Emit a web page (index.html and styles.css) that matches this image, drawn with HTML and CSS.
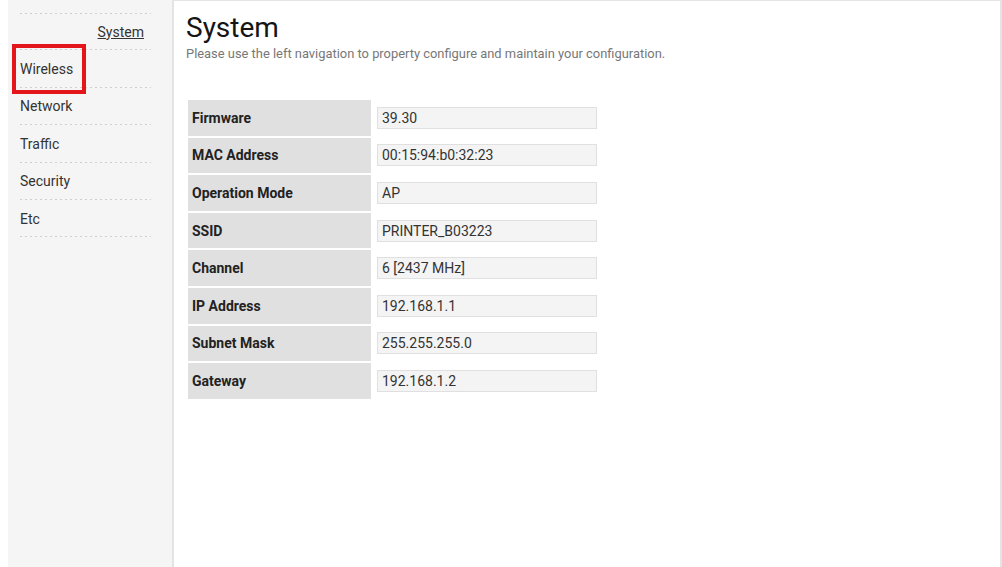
FILE: index.html
```html
<!DOCTYPE html>
<html lang="en">
<head>
<meta charset="utf-8">
<title>System</title>
<link rel="stylesheet" href="styles.css">
</head>
<body>
<div class="page">
  <aside class="sidebar">
    <ul class="nav">
      <li class="nav-item nav-current"><a href="#">System</a></li>
      <li class="nav-item nav-marked">Wireless<span class="highlight"></span></li>
      <li class="nav-item">Network</li>
      <li class="nav-item">Traffic</li>
      <li class="nav-item">Security</li>
      <li class="nav-item">Etc</li>
    </ul>
  </aside>
  <main class="main">
    <h1 class="title">System</h1>
    <p class="subtitle">Please use the left navigation to property configure and maintain your configuration.</p>
    <table class="info">
      <tr><th>Firmware</th><td><div class="field">39.30</div></td></tr>
      <tr><th>MAC Address</th><td><div class="field">00:15:94:b0:32:23</div></td></tr>
      <tr><th>Operation Mode</th><td><div class="field">AP</div></td></tr>
      <tr><th>SSID</th><td><div class="field">PRINTER_B03223</div></td></tr>
      <tr><th>Channel</th><td><div class="field">6 [2437 MHz]</div></td></tr>
      <tr><th>IP Address</th><td><div class="field">192.168.1.1</div></td></tr>
      <tr><th>Subnet Mask</th><td><div class="field">255.255.255.0</div></td></tr>
      <tr><th>Gateway</th><td><div class="field">192.168.1.2</div></td></tr>
    </table>
  </main>
</div>
</body>
</html>
```

FILE: styles.css
```css
html, body {
  margin: 0;
  padding: 0;
  background: #ffffff;
  font-family: Roboto, "Liberation Sans", Arial, sans-serif;
  color: #333;
}

.page {
  display: flex;
  padding-left: 8px;
  min-height: 567px;
}

.sidebar {
  width: 164px;
  flex: none;
  background: #f5f5f5;
  padding: 13px 0 0 12px;
  box-sizing: border-box;
}

.nav {
  list-style: none;
  margin: 0;
  padding: 0;
  width: 131px;
  background: repeating-linear-gradient(90deg, #cfcfcf 0 2px, transparent 2px 5px) top left / 100% 1px no-repeat;
}

.nav-item {
  position: relative;
  display: flex;
  align-items: center;
  height: 37.4px;
  box-sizing: border-box;
  font-size: 14px;
  line-height: 16px;
  color: #333;
  background: repeating-linear-gradient(90deg, #cfcfcf 0 2px, transparent 2px 5px) bottom left / 100% 1px no-repeat;
}

.nav-current {
  justify-content: flex-end;
  padding-right: 7px;
}

.nav-current a {
  color: #333;
  text-decoration: underline;
}

.highlight {
  position: absolute;
  left: -8px;
  top: -6px;
  width: 74px;
  height: 50px;
  box-sizing: border-box;
  border: 4px solid #e3161c;
}

.main {
  flex: 1;
  background: #fff;
  border: 2px solid #e4e4e4;
  border-top-width: 1px;
  border-bottom: 0;
  padding: 11px 12px 0 12px;
}

.title {
  margin: 0;
  font-size: 28px;
  line-height: 32px;
  font-weight: 400;
  color: #151515;
}

.subtitle {
  margin: 1px 0 0;
  font-size: 12.9px;
  line-height: 17px;
  color: #777;
}

.info {
  margin-top: 36px;
  border-collapse: separate;
  border-spacing: 2px;
}

.info th {
  width: 175px;
  height: 35.6px;
  padding: 0 4px;
  background: #e0e0e0;
  text-align: left;
  font-size: 14px;
  font-weight: 700;
  color: #222;
}

.info td {
  padding: 0 4px;
}

.field {
  width: 220px;
  height: 22px;
  box-sizing: border-box;
  padding: 0 4px;
  background: #f4f4f4;
  border: 1px solid #e0e0e0;
  font-size: 14px;
  line-height: 20px;
  color: #333;
}
```
